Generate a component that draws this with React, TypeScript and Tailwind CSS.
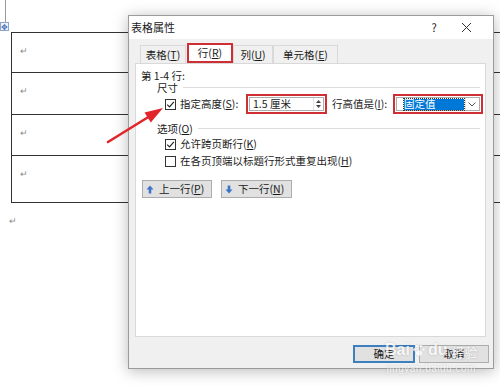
import React from "react";

const ui = "font-['Noto_Sans_CJK_SC','Microsoft_YaHei',sans-serif] text-[10.5px] text-[#1a1a1a]";

function Key({ k }: { k: string }) {
  return (
    <span>
      (<span className="underline underline-offset-1">{k}</span>)
    </span>
  );
}

function Check({ checked }: { checked?: boolean }) {
  return (
    <span className="flex h-[11px] w-[11px] shrink-0 items-center justify-center border border-[#333] bg-white">
      {checked && (
        <svg width="9" height="9" viewBox="0 0 9 9">
          <path d="M1.2 4.6 L3.5 6.9 L7.9 1.8" fill="none" stroke="#222" strokeWidth="1.1" />
        </svg>
      )}
    </span>
  );
}

function Tab({ label, k, w, active }: { label: string; k: string; w: number; active?: boolean }) {
  if (active) {
    return (
      <div
        className="flex h-[20px] items-center justify-center border-2 border-[#cf2e35] bg-white"
        style={{ width: w }}
      >
        {label}
        <Key k={k} />
      </div>
    );
  }
  return (
    <div
      className="flex h-[18px] items-center justify-center border border-b-0 border-[#d9d9d9] bg-[#f0f0f0]"
      style={{ width: w }}
    >
      {label}
      <Key k={k} />
    </div>
  );
}

function GroupTitle({ children }: { children: React.ReactNode }) {
  return (
    <div className="flex h-[12px] items-center pl-[21px] pr-[5px] leading-[11px]">
      <span className="pr-[5px]">{children}</span>
      <div className="h-px flex-1 bg-[#dcdcdc]" />
    </div>
  );
}

function NavButton({ label, k, up, w }: { label: string; k: string; up?: boolean; w: number }) {
  return (
    <div
      className="flex h-[18px] items-center gap-[5px] border border-[#adadad] bg-[#e1e1e1] pl-[3px]"
      style={{ width: w }}
    >
      <svg width="8" height="9" viewBox="0 0 8 9">
        {up ? (
          <path d="M4 0.5 L7.5 4.5 L5.3 4.5 L5.3 8.5 L2.7 8.5 L2.7 4.5 L0.5 4.5 Z" fill="#3d74c9" />
        ) : (
          <path d="M4 8.5 L7.5 4.5 L5.3 4.5 L5.3 0.5 L2.7 0.5 L2.7 4.5 L0.5 4.5 Z" fill="#3d74c9" />
        )}
      </svg>
      <span>
        {label}
        <Key k={k} />
      </span>
    </div>
  );
}

function ReturnMark() {
  return <span className="text-[9px] leading-none text-[#8a8a8a]">↵</span>;
}

export default function App() {
  const rows = [40, 42, 41, 46];
  return (
    <div className={`relative h-[391px] w-[500px] overflow-hidden bg-white ${ui}`}>
      {/* document behind the dialog */}
      <div className="flex flex-col">
        <div className="ml-[5px] h-[22px] w-px bg-[#9a9a9a]" />
        <div className="flex h-[9px] w-[9px] items-center justify-center border border-[#8aa6cc] bg-[#eef3fa] text-[8px] leading-none text-[#3b6fb6]">
          ✥
        </div>
        <div className="ml-[11px] mt-px w-[520px] border border-[#333]">
          {rows.map((h, i) => (
            <div
              key={i}
              className={`pl-[8px] pt-[9px] ${i < rows.length - 1 ? "border-b border-[#333]" : ""}`}
              style={{ height: h }}
            >
              <ReturnMark />
            </div>
          ))}
        </div>
        <div className="ml-[9px] mt-[9px]">
          <ReturnMark />
        </div>
      </div>

      {/* dialog window */}
      <div className="absolute left-[128px] top-[15px] flex h-[354px] w-[366px] flex-col border border-[#9b9b9b] bg-[#f0f0f0] shadow-[0_2px_14px_rgba(0,0,0,0.28)]">
        <div className="flex h-[23px] items-center bg-white pl-[2px]">
          <span className="flex-1 text-[11px]">表格属性</span>
          <span className="w-[12px] text-center text-[11px]">?</span>
          <div className="flex w-[53px] items-center justify-center">
            <svg width="11" height="11" viewBox="0 0 11 11">
              <path d="M1 1 L10 10 M10 1 L1 10" stroke="#333" strokeWidth="1" />
            </svg>
          </div>
        </div>

        <div className="flex flex-1 flex-col px-[6px] pt-[4px]">
          <div className="ml-[5px] flex h-[20px] items-end">
            <Tab label="表格" k="T" w={46} />
            <div className="w-[1px]" />
            <Tab label="行" k="R" w={46} active />
            <Tab label="列" k="U" w={40} />
            <Tab label="单元格" k="E" w={65} />
          </div>

          <div className="flex h-[274px] w-[351px] flex-col border border-[#d9d9d9] bg-white">
            <div className="mt-[6px] flex h-[11px] items-center pl-[5px] leading-[10px]">第 1-4 行:</div>
            <GroupTitle>尺寸</GroupTitle>

            <div className="mt-px flex h-[20px] items-center pl-[29px]">
              <Check checked />
              <span className="ml-[4px] w-[66px]">
                指定高度<Key k="S" />:
              </span>
              <div className="flex h-[20px] w-[81px] items-center border-2 border-[#cf2e35] p-[1px]">
                <div className="flex h-full flex-1 items-center border border-[#adadad] bg-white pl-[3px]">
                  <span className="flex-1">1.5 厘米</span>
                  <div className="flex h-full w-[10px] flex-col items-center justify-center gap-[2px] border-l border-[#e3e3e3]">
                    <svg width="5" height="3" viewBox="0 0 5 3">
                      <path d="M0 3 L2.5 0 L5 3 Z" fill="#444" />
                    </svg>
                    <svg width="5" height="3" viewBox="0 0 5 3">
                      <path d="M0 0 L2.5 3 L5 0 Z" fill="#444" />
                    </svg>
                  </div>
                </div>
              </div>
              <span className="ml-[5px] w-[61px]">
                行高值是<Key k="I" />:
              </span>
              <div className="flex h-[20px] w-[90px] items-center border-2 border-[#cf2e35] p-[1px]">
                <div className="flex h-full flex-1 items-center border border-[#adadad] bg-white pl-[7px] pr-[1px]">
                  <div className="flex h-[11px] w-[60px] items-center bg-[#0078d7] text-white outline-1 outline-dotted outline-[#333]">
                    固定值
                  </div>
                  <div className="ml-auto flex h-full w-[13px] items-center justify-center border-l border-[#e3e3e3]">
                    <svg width="8" height="5" viewBox="0 0 8 5">
                      <path d="M0.5 0.5 L4 4 L7.5 0.5" fill="none" stroke="#555" strokeWidth="1" />
                    </svg>
                  </div>
                </div>
              </div>
            </div>

            <div className="mt-[8px]">
              <GroupTitle>
                选项<Key k="O" />
              </GroupTitle>
            </div>
            <div className="mt-[4px] flex h-[12px] items-center gap-[4px] pl-[29px]">
              <Check checked />
              <span>
                允许跨页断行<Key k="K" />
              </span>
            </div>
            <div className="mt-[5px] flex h-[12px] items-center gap-[4px] pl-[29px]">
              <Check />
              <span>
                在各页顶端以标题行形式重复出现<Key k="H" />
              </span>
            </div>

            <div className="mt-[13px] flex gap-[9px] pl-[6px]">
              <NavButton label="上一行" k="P" up w={70} />
              <NavButton label="下一行" k="N" w={71} />
            </div>
          </div>

          <div className="mt-[8px] flex justify-end gap-[4px]">
            <div className="flex h-[18px] w-[62px] items-center justify-center border-2 border-[#3d7fbf] bg-[#e1e1e1]">
              确定
            </div>
            <div className="-mr-[2px] flex h-[18px] w-[70px] items-center justify-center border border-[#adadad] bg-[#e1e1e1]">
              取消
            </div>
          </div>
        </div>
      </div>

      {/* baidu watermark */}
      <div className="pointer-events-none absolute left-[385px] top-[342px] flex flex-col items-center font-['Liberation_Sans',sans-serif] text-white opacity-75 [text-shadow:0_0_2px_rgba(0,0,0,0.3)]">
        <div className="flex items-end gap-[2px] text-[16px] font-bold leading-none">
          <span>Bai</span>
          <svg width="14" height="14" viewBox="0 0 14 14" className="mb-[1px]">
            <ellipse cx="7" cy="10" rx="3.6" ry="3" fill="#fff" stroke="#ccc" strokeWidth="0.5" />
            <circle cx="2.5" cy="6.5" r="1.6" fill="#fff" stroke="#ccc" strokeWidth="0.5" />
            <circle cx="5.2" cy="3" r="1.6" fill="#fff" stroke="#ccc" strokeWidth="0.5" />
            <circle cx="8.8" cy="3" r="1.6" fill="#fff" stroke="#ccc" strokeWidth="0.5" />
            <circle cx="11.5" cy="6.5" r="1.6" fill="#fff" stroke="#ccc" strokeWidth="0.5" />
          </svg>
          <span>du</span>
          <span className="ml-[2px] font-['Noto_Sans_CJK_SC',sans-serif] text-[13px] font-normal">经验</span>
        </div>
        <div className="mt-[6px] text-[10px] leading-none tracking-[0.5px]">jingyan.baidu.com</div>
      </div>

      {/* red annotation arrow */}
      <svg className="pointer-events-none absolute left-0 top-0" width="500" height="391" viewBox="0 0 500 391">
        <line x1="108" y1="142" x2="150" y2="116" stroke="#e0262a" strokeWidth="2.6" strokeLinecap="round" />
        <polygon points="163,108 150.8,122.6 144.5,112.4" fill="#e0262a" />
      </svg>
    </div>
  );
}
